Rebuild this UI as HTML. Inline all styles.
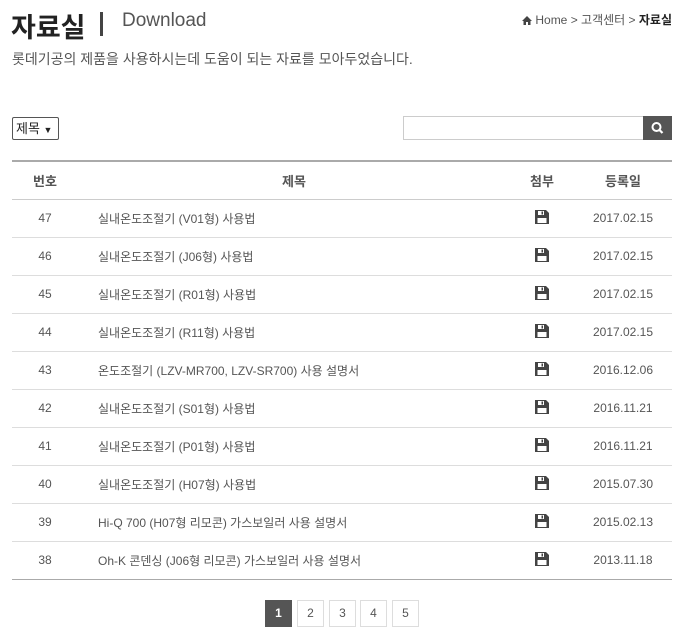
<!DOCTYPE html>
<html><head><meta charset="utf-8"><style>
*{margin:0;padding:0;box-sizing:border-box}
body{width:681px;height:640px;background:#fff;font-family:"Liberation Sans","Noto Sans CJK KR",sans-serif;color:#333;position:relative;overflow:hidden}
.abs{position:absolute;white-space:nowrap}
table{position:absolute;left:12px;top:160px;width:660px;border-collapse:collapse;border-top:2px solid #aaa;border-bottom:1px solid #aaa;table-layout:fixed}
th{height:38px;font-size:13px;font-weight:bold;color:#555;border-bottom:1px solid #ccc}
td{height:38px;font-size:12px;color:#555;border-bottom:1px solid #ddd}
tr:last-child td{border-bottom:none}
.c{text-align:center}
.pg{position:absolute;top:600px;width:27px;height:27px;border:1px solid #ddd;font-size:12px;color:#555;text-align:center;line-height:25px}
</style></head><body>
<div class="abs" style="left:11px;top:6px;font-size:27px;font-weight:bold;color:#222">자료실</div>
<div class="abs" style="left:100px;top:12px;width:3px;height:24px;background:#444"></div>
<div class="abs" style="left:122px;top:10px;font-size:19px;color:#555">Download</div>
<div class="abs" style="right:9px;top:11px;font-size:12px;color:#555">
<svg width="10" height="9" viewBox="0 0 10 9" style="vertical-align:-1px"><path d="M5 0L0 5h1.5v4h2.5V6h2v3h2.5V5H10z" fill="#444"/></svg> Home &gt; 고객센터 &gt; <b style="color:#222">자료실</b></div>
<div class="abs" style="left:12px;top:49px;font-size:14px;color:#555">롯데기공의 제품을 사용하시는데 도움이 되는 자료를 모아두었습니다.</div>
<div class="abs" style="left:12px;top:117px;width:47px;height:23px;border:1px solid #555;border-radius:2px;font-size:13px;line-height:21px;padding-left:3px;color:#222">제목 <span style="font-size:9px">▼</span></div>
<div class="abs" style="left:403px;top:116px;width:241px;height:24px;border:1px solid #ccc"></div>
<div class="abs" style="left:643px;top:116px;width:29px;height:24px;background:#555">
<svg width="29" height="24" viewBox="0 0 29 24"><circle cx="13.5" cy="11" r="4" fill="none" stroke="#fff" stroke-width="2"/><path d="M16.5 14l3 3" stroke="#fff" stroke-width="2.2"/></svg></div>
<table>
<colgroup><col style="width:66px"><col><col style="width:64px"><col style="width:98px"></colgroup>
<tr><th>번호</th><th>제목</th><th>첨부</th><th>등록일</th></tr>
<tr><td class="c">47</td><td style="padding-left:20px">실내온도조절기 (V01형) 사용법</td><td class="c"><svg width="16" height="16" viewBox="0 0 16 16"><path d="M1 1h11l3 3v11H1z" fill="#444"/><rect x="4" y="2" width="6" height="4" fill="#fff"/><rect x="7.5" y="2.5" width="1.5" height="3" fill="#444"/><rect x="3.5" y="9" width="9" height="5" fill="#fff"/></svg></td><td class="c">2017.02.15</td></tr>
<tr><td class="c">46</td><td style="padding-left:20px">실내온도조절기 (J06형) 사용법</td><td class="c"><svg width="16" height="16" viewBox="0 0 16 16"><path d="M1 1h11l3 3v11H1z" fill="#444"/><rect x="4" y="2" width="6" height="4" fill="#fff"/><rect x="7.5" y="2.5" width="1.5" height="3" fill="#444"/><rect x="3.5" y="9" width="9" height="5" fill="#fff"/></svg></td><td class="c">2017.02.15</td></tr>
<tr><td class="c">45</td><td style="padding-left:20px">실내온도조절기 (R01형) 사용법</td><td class="c"><svg width="16" height="16" viewBox="0 0 16 16"><path d="M1 1h11l3 3v11H1z" fill="#444"/><rect x="4" y="2" width="6" height="4" fill="#fff"/><rect x="7.5" y="2.5" width="1.5" height="3" fill="#444"/><rect x="3.5" y="9" width="9" height="5" fill="#fff"/></svg></td><td class="c">2017.02.15</td></tr>
<tr><td class="c">44</td><td style="padding-left:20px">실내온도조절기 (R11형) 사용법</td><td class="c"><svg width="16" height="16" viewBox="0 0 16 16"><path d="M1 1h11l3 3v11H1z" fill="#444"/><rect x="4" y="2" width="6" height="4" fill="#fff"/><rect x="7.5" y="2.5" width="1.5" height="3" fill="#444"/><rect x="3.5" y="9" width="9" height="5" fill="#fff"/></svg></td><td class="c">2017.02.15</td></tr>
<tr><td class="c">43</td><td style="padding-left:20px">온도조절기 (LZV-MR700, LZV-SR700) 사용 설명서</td><td class="c"><svg width="16" height="16" viewBox="0 0 16 16"><path d="M1 1h11l3 3v11H1z" fill="#444"/><rect x="4" y="2" width="6" height="4" fill="#fff"/><rect x="7.5" y="2.5" width="1.5" height="3" fill="#444"/><rect x="3.5" y="9" width="9" height="5" fill="#fff"/></svg></td><td class="c">2016.12.06</td></tr>
<tr><td class="c">42</td><td style="padding-left:20px">실내온도조절기 (S01형) 사용법</td><td class="c"><svg width="16" height="16" viewBox="0 0 16 16"><path d="M1 1h11l3 3v11H1z" fill="#444"/><rect x="4" y="2" width="6" height="4" fill="#fff"/><rect x="7.5" y="2.5" width="1.5" height="3" fill="#444"/><rect x="3.5" y="9" width="9" height="5" fill="#fff"/></svg></td><td class="c">2016.11.21</td></tr>
<tr><td class="c">41</td><td style="padding-left:20px">실내온도조절기 (P01형) 사용법</td><td class="c"><svg width="16" height="16" viewBox="0 0 16 16"><path d="M1 1h11l3 3v11H1z" fill="#444"/><rect x="4" y="2" width="6" height="4" fill="#fff"/><rect x="7.5" y="2.5" width="1.5" height="3" fill="#444"/><rect x="3.5" y="9" width="9" height="5" fill="#fff"/></svg></td><td class="c">2016.11.21</td></tr>
<tr><td class="c">40</td><td style="padding-left:20px">실내온도조절기 (H07형) 사용법</td><td class="c"><svg width="16" height="16" viewBox="0 0 16 16"><path d="M1 1h11l3 3v11H1z" fill="#444"/><rect x="4" y="2" width="6" height="4" fill="#fff"/><rect x="7.5" y="2.5" width="1.5" height="3" fill="#444"/><rect x="3.5" y="9" width="9" height="5" fill="#fff"/></svg></td><td class="c">2015.07.30</td></tr>
<tr><td class="c">39</td><td style="padding-left:20px">Hi-Q 700 (H07형 리모콘) 가스보일러 사용 설명서</td><td class="c"><svg width="16" height="16" viewBox="0 0 16 16"><path d="M1 1h11l3 3v11H1z" fill="#444"/><rect x="4" y="2" width="6" height="4" fill="#fff"/><rect x="7.5" y="2.5" width="1.5" height="3" fill="#444"/><rect x="3.5" y="9" width="9" height="5" fill="#fff"/></svg></td><td class="c">2015.02.13</td></tr>
<tr><td class="c">38</td><td style="padding-left:20px">Oh-K 콘덴싱 (J06형 리모콘) 가스보일러 사용 설명서</td><td class="c"><svg width="16" height="16" viewBox="0 0 16 16"><path d="M1 1h11l3 3v11H1z" fill="#444"/><rect x="4" y="2" width="6" height="4" fill="#fff"/><rect x="7.5" y="2.5" width="1.5" height="3" fill="#444"/><rect x="3.5" y="9" width="9" height="5" fill="#fff"/></svg></td><td class="c">2013.11.18</td></tr>
</table>
<div class="pg" style="left:265px;background:#555;border-color:#555;color:#fff;font-weight:bold">1</div>
<div class="pg" style="left:297px">2</div>
<div class="pg" style="left:329px">3</div>
<div class="pg" style="left:360px">4</div>
<div class="pg" style="left:392px">5</div>
</body></html>
